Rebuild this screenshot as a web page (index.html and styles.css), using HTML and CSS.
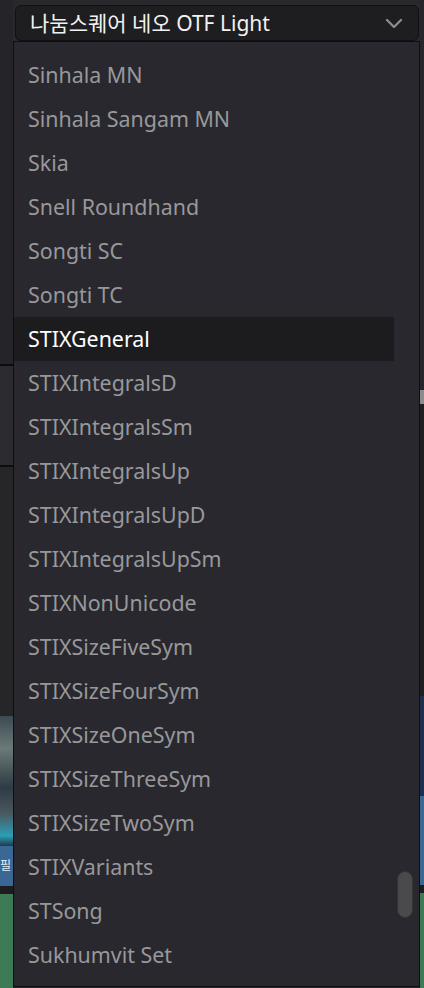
FILE: index.html
```html
<!DOCTYPE html>
<html lang="ko">
<head>
    <meta charset="UTF-8">
    <meta name="viewport" content="width=device-width, initial-scale=1.0">
    <title>Font picker</title>
    <link rel="stylesheet" href="styles.css">
</head>
<body>
    <div class="backdrop">
        <div class="edge edge-left">
            <div class="band band-top"></div>
            <div class="band band-line"></div>
            <div class="band band-panel"></div>
            <div class="band band-line"></div>
            <div class="band band-mid"></div>
            <div class="band band-photo"></div>
            <div class="band band-blue"><span>필</span></div>
            <div class="band band-dark"></div>
            <div class="band band-green"></div>
        </div>
        <div class="edge edge-center"></div>
        <div class="edge edge-right">
            <div class="band band-top-r"></div>
            <div class="band band-gray"></div>
            <div class="band band-mid-r"></div>
            <div class="band band-navy"></div>
            <div class="band band-blue-r"></div>
            <div class="band band-dark"></div>
            <div class="band band-green"></div>
        </div>
    </div>

    <div class="select">
        <span class="select-value">나눔스퀘어 네오 OTF Light</span>
        <svg class="chevron" width="18" height="12" viewBox="0 0 18 12">
            <path d="M2 2 L9 9 L16 2" fill="none" stroke="#8a8a8c" stroke-width="2.4" stroke-linecap="round" stroke-linejoin="round"/>
        </svg>
    </div>

    <div class="menu">
        <ul class="options" id="fontList"></ul>
        <div class="scrollbar"><div class="thumb"></div></div>
    </div>

    <script>
        const fonts = [
            "Sinhala MN", "Sinhala Sangam MN", "Skia", "Snell Roundhand",
            "Songti SC", "Songti TC", "STIXGeneral", "STIXIntegralsD",
            "STIXIntegralsSm", "STIXIntegralsUp", "STIXIntegralsUpD",
            "STIXIntegralsUpSm", "STIXNonUnicode", "STIXSizeFiveSym",
            "STIXSizeFourSym", "STIXSizeOneSym", "STIXSizeThreeSym",
            "STIXSizeTwoSym", "STIXVariants", "STSong", "Sukhumvit Set"
        ];
        const list = document.getElementById("fontList");
        fonts.forEach(name => {
            const li = document.createElement("li");
            li.className = name === "STIXGeneral" ? "option active" : "option";
            li.textContent = name;
            list.appendChild(li);
        });
    </script>
</body>
</html>
```

FILE: styles.css
```css
body {
    margin: 0;
    background-color: #262629;
    font-family: 'Noto Sans', 'Noto Sans CJK KR', sans-serif;
    width: 424px;
    height: 988px;
    overflow: hidden;
    position: relative;
}
.backdrop {
    display: flex;
    height: 988px;
}
.edge {
    display: flex;
    flex-direction: column;
}
.edge-left {
    width: 13px;
}
.edge-center {
    flex: 1;
    background-color: #28282d;
}
.edge-right {
    width: 4px;
}
.band-top {
    height: 364px;
    background-color: #252529;
}
.band-line {
    height: 2px;
    background-color: #0c0c0d;
}
.band-panel {
    height: 99px;
    background-color: #2b2b30;
}
.band-mid {
    height: 249px;
    background-color: #262629;
}
.band-photo {
    height: 130px;
    background: linear-gradient(180deg, #3c4a52 0%, #6a7a78 25%, #2e3b44 55%, #4a5860 75%, #2a9fb5 92%, #1f3a4a 100%);
}
.band-blue {
    height: 40px;
    background-color: #3b6794;
    color: #e8eef5;
    font-size: 12px;
    line-height: 40px;
}
.band-dark {
    height: 8px;
    background-color: #1d1d1f;
}
.band-green {
    flex: 1;
    background-color: #3d7b57;
}
.band-top-r {
    height: 390px;
    background-color: #27272b;
}
.band-gray {
    height: 14px;
    background-color: #8c8c8c;
}
.band-mid-r {
    height: 292px;
    background-color: #1f1f22;
}
.band-navy {
    height: 100px;
    background-color: #1d2e4e;
}
.band-blue-r {
    height: 89px;
    background-color: #3b6794;
}

/* select box */
.select {
    position: absolute;
    left: 15px;
    top: 5px;
    width: 404px;
    height: 36px;
    box-sizing: border-box;
    border: 1px solid #111113;
    border-radius: 6px;
    background-color: #1e1e20;
    display: flex;
    align-items: center;
    justify-content: space-between;
    padding: 0 15px 0 14px;
}
.select-value {
    color: #f2f2f2;
    font-size: 21px;
    line-height: 1;
}
.chevron {
    margin-top: 1px;
}

/* dropdown */
.menu {
    position: absolute;
    left: 13px;
    top: 41px;
    width: 407px;
    height: 946px;
    box-sizing: border-box;
    border: 1px solid #0e0e10;
    background-color: #28282e;
    display: flex;
    overflow: hidden;
}
.options {
    list-style: none;
    margin: 0;
    padding: 11px 0 0 0;
    width: 380px;
}
.option {
    height: 44px;
    line-height: 44px;
    padding-left: 14px;
    font-size: 21.4px;
    color: #98989b;
    white-space: nowrap;
}
.option.active {
    background-color: #1c1c1f;
    color: #ffffff;
}
.scrollbar {
    flex: 1;
    position: relative;
}
.thumb {
    position: absolute;
    left: 3px;
    top: 829px;
    width: 16px;
    height: 47px;
    box-sizing: border-box;
    border-radius: 8px;
    background-color: #4a4a4d;
    border: 1px solid #333336;
}
```
